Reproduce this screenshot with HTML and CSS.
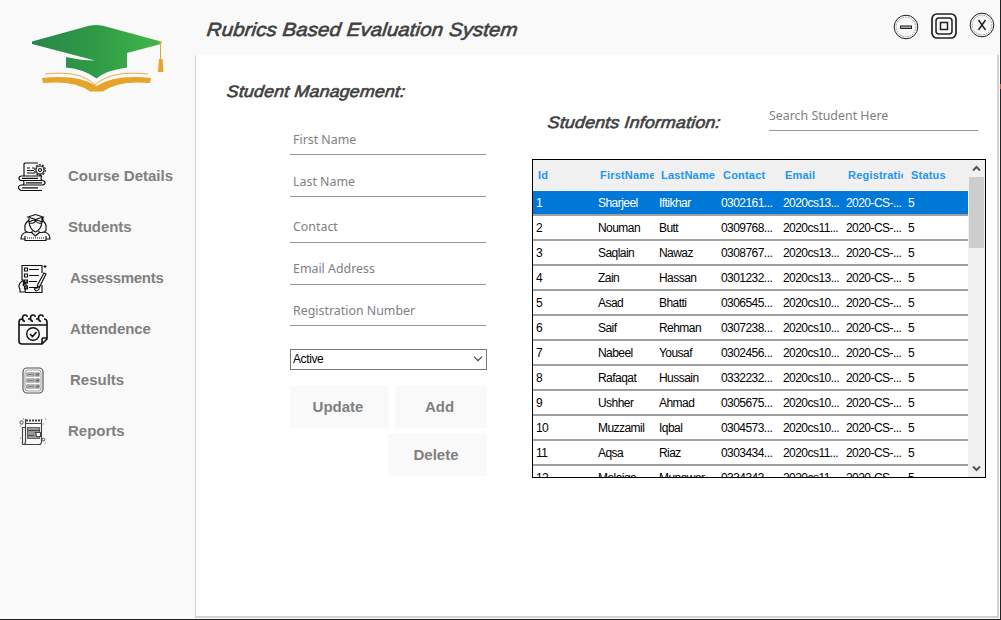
FILE: index.html
```html
<!DOCTYPE html>
<html lang="en">
<head>
<meta charset="utf-8">
<title>Rubrics Based Evaluation System</title>
<link rel="stylesheet" href="styles.css">
</head>
<body>
<div class="window">
  <aside class="sidebar">
    <svg class="logo" width="140" height="76" viewBox="28 20 140 76">
      <defs><linearGradient id="cap" x1="0" x2="1"><stop offset="0" stop-color="#28864a"/><stop offset=".5" stop-color="#2f9b46"/><stop offset="1" stop-color="#43b649"/></linearGradient></defs>
      <path fill="url(#cap)" d="M32 41.500L89 25.800q7-1.800 14 0L161 41.500V44L127 53V67.500Q107 70 96.500 78.500Q84 69 66 67.500V57Q82 60.500 95 60.500L32 44z"/>
      <path fill="#e7a42b" d="M42 78Q78 74 96.500 86Q115 74 151 78L150 83Q119 80 103 91.500H90Q75 80 43 83z"/>
      <path fill="none" stroke="#e7ad43" stroke-width="1" d="M45 74Q81 70 95 85Q111 70 148 74"/>
      <path fill="none" stroke="#e7a42b" d="M160.500 43V60"/><path fill="#e7a42b" d="M159.500 41h2v3h-2zM159 59h3.500l1 13h-5.500z"/>
    </svg>
    <nav class="menu">
      <a class="item"><svg width="30" height="30" viewBox="0 0 30 30"><path d="M6 14V2Q6 1 8 1H20M22 12V14M24 14H3.500Q1 14 1 16.200T3.500 18.500H24Q22 16.500 24 14M5 18.500H24q3 0 3 2.200T24 23H5Q7 21 5 18.500M3 23H25M3 23Q0 24 .5 26T3 28.500H24M4 16.300H20M8 20.800H24M4 25.800H20M9 6H12M14 6H16M9 8.500H16M9 11H17"/><circle cx="22" cy="8" r="4"/><circle cx="22" cy="8" r="1.500"/><circle cx="22" cy="8" r="5.300" stroke-dasharray="2 1.300"/></svg><span>Course Details</span></a>
      <a class="item students"><svg width="31" height="30" viewBox="0 0 31 30"><path d="M8 4L15.500 1.500L23 4L15.500 6.500zM9 5V9Q15.500 5 22 9V5M23 4V9M9 9Q10 17 15.500 19Q21 17 22 9M10 10Q14 11 15.500 8Q18 11 21 10M9 7Q4 11 5 15Q4 19 9 19.500H12M22 7Q27 11 26 15Q27 19 22 19.500H19M12 18V20L15.500 23L19 20V18M7 19Q1 20 1 26H5M24 19Q30 20 30 26H26M5 23V27.500H26V23"/><path stroke-dasharray="1 1" d="M7 25H24"/></svg><span>Students</span></a>
      <a class="item assess"><svg width="30" height="30" viewBox="0 0 30 30"><path d="M4 16V1.500H24V9M24 21V28.500H7M11 5.500H21M11 11.500H21M11 17.500H19M11 23.500H19M6.500 4h3v3h-3zM6.500 10h3v3h-3zM6.500 16h3v3h-3zM6.500 22h3v3h-3zM2 28V25Q0 23 2 19L5 16Q6 19 5 22L8 18V24Q7 26 7 28zM26 9L28 10L22 22L19 24L20 20zM18 24Q15 24 18 27Q21 27 22 22"/><path d="M27 1V4M25.500 2.500H28.500"/></svg><span>Assessments</span></a>
      <a class="item attend"><svg width="30" height="31" viewBox="0 0 30 31"><path stroke-width="1.600" d="M4 5Q1 5 1 8V27Q1 30 4 30H24L29 25V8Q29 5 26 5M1 11H29M10 5H12M18 5H20M29 24H25Q24 24 24 26V30M7 7.500Q4.500 7 4.500 4T7 1T9 3M15 7.500Q12.500 7 12.500 4T15 1T17 3M23 7.500Q20.500 7 20.500 4T23 1T25 3M12 20L14.500 22.500L18.500 18"/><circle cx="15" cy="20" r="6.300" stroke-width="1.400"/></svg><span>Attendence</span></a>
      <a class="item results"><svg width="22" height="27" viewBox="0 0 22 27"><rect x="1" y="1" width="20" height="25" rx="4" stroke="#555"/><rect x="3" y="3" width="16" height="21" rx="3" stroke="#aaa"/><path stroke="#777" d="M5 6h7v3H5zM5 12h7v3H5zM5 18h7v3H5zM14 6h3v3h-3zM14 12h3v3h-3zM14 18h3v3h-3zM6 7.500h5M6 13.500h5M6 19.500h5M14 9l3-3M14 15l3-3M14 21l3-3"/></svg><span>Results</span></a>
      <a class="item reports"><svg width="28" height="28" viewBox="0 0 28 28"><path stroke="#444" d="M6.500 1V24Q6.500 26.500 4 26.500H20Q22.500 26.500 22.500 24V1M6.500 9.500H3.500V25Q3 26.500 5 26.500M7 5.500H22"/><path stroke="#444" stroke-width="2" stroke-dasharray="2 1" d="M7 2.500H22"/><path fill="#999" stroke="#666" d="M8.500 9.500h12v11h-12z"/><path stroke="#444" d="M9 12.500h12M9 17.500h6"/><path fill="#fff" stroke="#444" d="M16.500 14.500h5v4h-4z"/><circle cx="2.500" cy="4.500" r="1.600" stroke="#777"/><circle cx="24.500" cy="21.500" r="1.300" stroke="#777"/><path stroke="#777" d="M4 1h1M26 1h1M24 6h1M1 8h1M1 20h1M26 25h1"/></svg><span>Reports</span></a>
    </nav>
  </aside>
  <div class="right">
    <header class="topbar">
      <h1>Rubrics Based Evaluation System</h1>
      <div class="controls">
        <svg width="26" height="26" viewBox="0 0 26 26"><circle cx="13" cy="13" r="11.800"/><circle class="dash" cx="13" cy="13" r="9.800"/><rect x="7.500" y="12" width="11" height="2.500" fill="#aaa"/></svg>
        <svg width="26" height="26" viewBox="0 0 26 26"><rect x="1" y="1" width="24" height="24" rx="5" stroke-width="1.700"/><rect x="5" y="5" width="16" height="16" rx="3" stroke-width="1.500"/><rect x="9.500" y="9.500" width="7" height="7" stroke-width="1.500"/></svg>
        <svg width="26" height="26" viewBox="0 0 26 26"><circle cx="13" cy="13" r="11.800"/><circle class="dash" cx="13" cy="13" r="9.800"/><path stroke-width="1.500" d="M9.500 8L16.500 18M16.500 8L9.500 18"/></svg>
      </div>
    </header>
    <main class="content">
      <section class="manage">
        <h2>Student Management:</h2>
        <form class="form">
          <div class="field f1">First Name</div>
          <div class="field f2">Last Name</div>
          <div class="field f3">Contact</div>
          <div class="field f4">Email Address</div>
          <div class="field f5">Registration Number</div>
          <div class="select"><span>Active</span><svg width="10" height="6" viewBox="0 0 10 6"><path stroke="#444" stroke-width="1.200" d="M1 .7L5 4.700L9 .7"/></svg></div>
          <div class="buttons"><button type="button" class="update">Update</button><button type="button" class="add">Add</button><button type="button" class="delete">Delete</button></div>
        </form>
      </section>
      <section class="info">
        <div class="info-head"><h2>Students Information:</h2><div class="search">Search Student Here</div></div>
        <div class="grid">
          <div class="rows">
            <div class="row head"><span>Id</span><span>FirstName</span><span>LastName</span><span>Contact</span><span>Email</span><span>Registration</span><span>Status</span></div>
            <div class="row selected"><span>1</span><span>Sharjeel</span><span>Iftikhar</span><span>0302161...</span><span>2020cs13...</span><span>2020-CS-...</span><span>5</span></div>
            <div class="row"><span>2</span><span>Nouman</span><span>Butt</span><span>0309768...</span><span>2020cs11...</span><span>2020-CS-...</span><span>5</span></div>
            <div class="row"><span>3</span><span>Saqlain</span><span>Nawaz</span><span>0308767...</span><span>2020cs13...</span><span>2020-CS-...</span><span>5</span></div>
            <div class="row"><span>4</span><span>Zain</span><span>Hassan</span><span>0301232...</span><span>2020cs13...</span><span>2020-CS-...</span><span>5</span></div>
            <div class="row"><span>5</span><span>Asad</span><span>Bhatti</span><span>0306545...</span><span>2020cs10...</span><span>2020-CS-...</span><span>5</span></div>
            <div class="row"><span>6</span><span>Saif</span><span>Rehman</span><span>0307238...</span><span>2020cs10...</span><span>2020-CS-...</span><span>5</span></div>
            <div class="row"><span>7</span><span>Nabeel</span><span>Yousaf</span><span>0302456...</span><span>2020cs10...</span><span>2020-CS-...</span><span>5</span></div>
            <div class="row"><span>8</span><span>Rafaqat</span><span>Hussain</span><span>0332232...</span><span>2020cs10...</span><span>2020-CS-...</span><span>5</span></div>
            <div class="row"><span>9</span><span>Ushher</span><span>Ahmad</span><span>0305675...</span><span>2020cs10...</span><span>2020-CS-...</span><span>5</span></div>
            <div class="row"><span>10</span><span>Muzzamil</span><span>Iqbal</span><span>0304573...</span><span>2020cs10...</span><span>2020-CS-...</span><span>5</span></div>
            <div class="row"><span>11</span><span>Aqsa</span><span>Riaz</span><span>0303434...</span><span>2020cs11...</span><span>2020-CS-...</span><span>5</span></div>
            <div class="row"><span>12</span><span>Malaiga</span><span>Munawar</span><span>0334343...</span><span>2020cs11...</span><span>2020-CS-...</span><span>5</span></div>
          </div>
          <div class="scrollbar">
            <svg width="9" height="7" viewBox="0 0 9 7"><path d="M1 5.500L4.500 2L8 5.500"/></svg>
            <div class="thumb"></div>
            <svg width="9" height="7" viewBox="0 0 9 7"><path d="M1 1.500L4.500 5L8 1.500"/></svg>
          </div>
        </div>
      </section>
    </main>
  </div>
</div>
</body>
</html>
```
FILE: styles.css
```css
* { box-sizing: border-box; }
body { margin: 0; font-family: "Liberation Sans", Arial, sans-serif; background: #f9f9f9; }
h1, h2 { margin: 0; color: #404040; font-weight: 400; font-style: italic; white-space: nowrap; -webkit-text-stroke: .6px #404040; transform: skewX(-6deg) scaleX(1.08); }
svg { display: block; fill: none; stroke: #222; flex: none; }
.window { width: 1001px; height: 620px; display: flex; background: linear-gradient(#222 84px, #c8642a 84px 89px, #222 89px) right / 1px 100% no-repeat #f9f9f9; border-bottom: 1px solid #222; padding-right: 1px; overflow: hidden; }
.sidebar { width: 195px; flex: none; padding-top: 20px; }
.logo { margin-left: 28px; stroke: none; }
.menu { padding: 55px 0 0 18px; }
.menu svg { stroke: #111; stroke-width: 1.15; }
.item { display: flex; align-items: center; height: 51px; color: #808080; font-size: 15px; font-weight: 700; }
.item span { margin-left: 20px; padding-bottom: 2px; white-space: nowrap; }
.item.students svg { margin-left: 2px; }
.item.students span { margin-left: 17px; letter-spacing: -.1px; }
.item.assess span { margin-left: 22px; letter-spacing: -.3px; }
.item.attend span { margin-left: 22px; letter-spacing: -.1px; }
.item.results svg { margin-left: 4px; }
.item.results span { margin-left: 26px; }
.item.reports svg { margin-left: 1px; }
.item.reports span { margin-left: 21px; }
.right { flex: 1; display: flex; flex-direction: column; }
.topbar { height: 55px; flex: none; display: flex; justify-content: space-between; padding: 0 5px 0 12px; }
h1 { font-size: 19px; height: 55px; line-height: 24px; padding-top: 18px; letter-spacing: .05px; transform-origin: 0 30px; }
.controls { display: flex; gap: 12px; padding-top: 13px; }
.controls svg:first-child { margin-top: 1px; }
.controls svg:last-child { margin-top: -1px; }
.dash { stroke: #999; stroke-dasharray: 1.500 1; }
.content { height: 563px; margin-right: 1px; border: solid #d2d2d2; border-width: 0 2px 2px 1px; background: #fff; display: flex; }
.manage { width: 336px; flex: none; padding: 26px 0 0 31px; }
h2 { font-size: 16.500px; line-height: 20px; height: 20px; letter-spacing: .15px; transform-origin: 0 50%; }
.form { width: 197px; margin-left: 63px; }
.field, .search { font-family: "Noto Sans", sans-serif; font-size: 12.400px; line-height: 18px; color: #808080; border-bottom: 1px solid #999; }
.field { width: 196px; padding: 17px 0 0 3px; height: 42px; }
.f1 { height: 54px; padding-top: 30px; }
.f2 { padding-top: 18px; }
.f3 { height: 46px; padding-top: 21px; }
.f5 { height: 41px; }
.select { margin-top: 23px; height: 21px; border: 1px solid #777; display: flex; justify-content: space-between; align-items: center; padding: 0 3px 1px 2px; font-size: 12px; line-height: 18px; letter-spacing: -.4px; }
.buttons { margin-top: 16px; display: flex; flex-wrap: wrap; justify-content: flex-end; gap: 6px; }
button { height: 42px; border: 0; padding: 0 3px 2px 0; background: #f9f9f9; color: #808080; font: 700 15px "Liberation Sans", sans-serif; }
.update { width: 99px; }
.add { width: 92px; }
.delete { width: 99px; }
.info { width: 454px; }
.info-head { height: 104px; padding: 51px 8px 0 16px; display: flex; justify-content: space-between; }
.info-head h2 { margin-top: 6px; }
.search { width: 209px; height: 25px; padding-top: 1px; font-size: 12.400px; }
.grid { height: 319px; border: 1px solid #000; display: flex; overflow: hidden; background: #fff; }
.rows { width: 435px; flex: none; }
.row { height: 25px; border-bottom: 2px solid #a0a0a0; display: grid; grid-template-columns: 62px 61px 62px 62px 63px 62px 63px; font-size: 12px; line-height: 24px; letter-spacing: -.55px; color: #000; white-space: nowrap; }
.row span { padding-left: 3px; overflow: hidden; }
.row.head { height: 31px; background: #f0f0f0; border-bottom: 1px solid #fff; color: #2196f3; font-size: 11px; font-weight: 700; line-height: 30px; letter-spacing: .2px; }
.head span { margin: 0 2px 0 5px; padding: 0; }
.head span:nth-child(3) { margin-right: 0; }
.head span:last-child { margin-left: 6px; }
.row.selected { background: #0078d7; color: #fff; }
.scrollbar { width: 17px; background: #f0f0f0; display: flex; flex-direction: column; align-items: center; padding: 5px 0; }
.scrollbar svg { stroke: #555; stroke-width: 2; }
.scrollbar svg:last-child { margin-top: auto; }
.thumb { width: 15px; height: 71px; margin-top: 5px; background: #cdcdcd; flex: none; }
```
